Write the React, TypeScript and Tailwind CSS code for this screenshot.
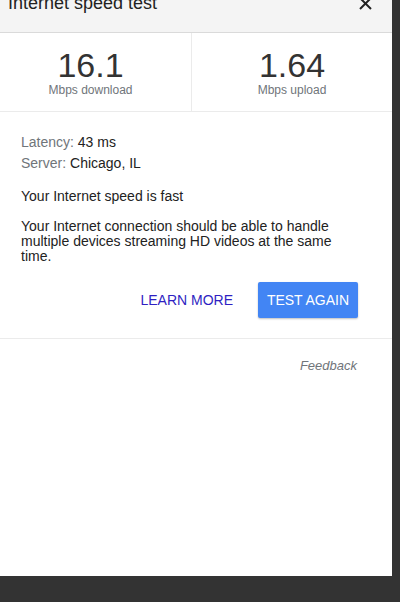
import React from "react";

export default function App() {
  return (
    <div
      className="min-h-[602px] w-[400px] bg-[#333333] flex flex-col"
      style={{ fontFamily: '"Liberation Sans", Arial, sans-serif' }}
    >
      <div className="w-[392px] h-[576px] bg-white flex flex-col">
        {/* Header */}
        <div className="h-[33px] bg-[#f4f4f4] border-b border-[#dadada] overflow-hidden flex justify-between pl-2 pr-[20px]">
          <div className="text-[18px] leading-[18px] text-[#222] -mt-[6px]">Internet speed test</div>
          <svg width="13" height="13" viewBox="0 0 13 13" className="-mt-[3px]">
            <path d="M1 1 L12 12 M12 1 L1 12" stroke="#222" strokeWidth="2" />
          </svg>
        </div>

        {/* Stats */}
        <div className="flex border-b border-[#ebebeb]">
          <div className="w-[192px] flex flex-col items-center pt-[15px] pb-[13px] pr-[10px] border-r border-[#ebebeb]">
            <div className="text-[34px] leading-[34px] text-[#333]">16.1</div>
            <div className="text-[12px] leading-[16px] text-[#70757a]">Mbps download</div>
          </div>
          <div className="flex-1 flex flex-col items-center pt-[15px] pb-[13px]">
            <div className="text-[34px] leading-[34px] text-[#333]">1.64</div>
            <div className="text-[12px] leading-[16px] text-[#70757a]">Mbps upload</div>
          </div>
        </div>

        {/* Details */}
        <div className="pl-[21px] pr-[34px] pt-[20px] pb-[20px] border-b border-[#ebebeb] text-[14px] text-[#222]">
          <div className="leading-[21px]">
            <span className="text-[#70757a]">Latency:</span> 43 ms
          </div>
          <div className="leading-[21px]">
            <span className="text-[#70757a]">Server:</span> Chicago, IL
          </div>
          <div className="leading-[21px] mt-[12px]">Your Internet speed is fast</div>
          <div className="leading-[15px] mt-[12px]">
            Your Internet connection should be able to handle multiple devices streaming HD videos at the same time.
          </div>
          <div className="flex justify-end items-center gap-[17px] mt-[18px]">
            <button className="h-[36px] px-2 text-[14px] text-[#2f1fc2] uppercase">Learn more</button>
            <button className="h-[36px] w-[100px] rounded-[2px] bg-[#4285f4] text-white text-[14px] uppercase shadow-[0_1px_2px_rgba(0,0,0,0.25)]">
              Test again
            </button>
          </div>
        </div>

        {/* Feedback */}
        <div className="flex justify-end pr-[35px] pt-[19px]">
          <span className="italic text-[13px] leading-[16px] text-[#70757a]">Feedback</span>
        </div>
      </div>
    </div>
  );
}
